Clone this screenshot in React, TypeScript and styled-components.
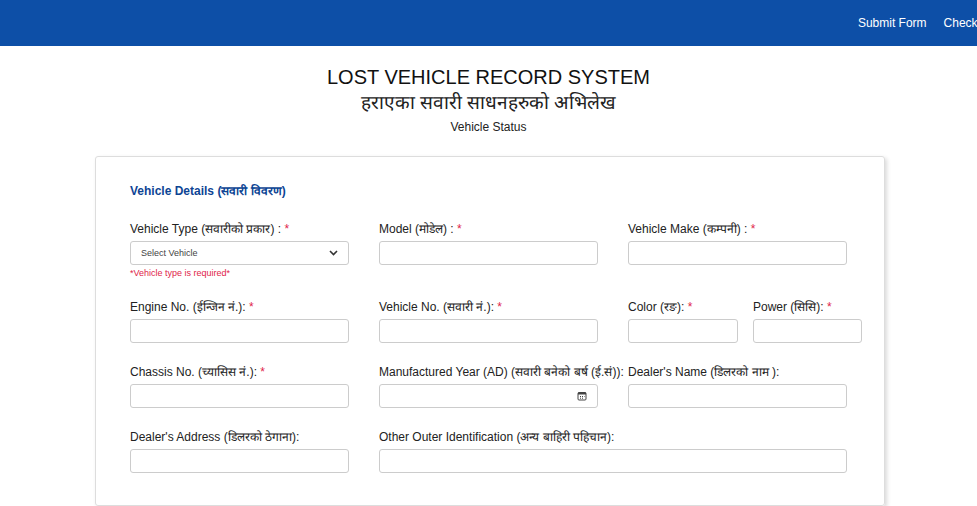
import React from "react";
import styled, { createGlobalStyle } from "styled-components";

const G = createGlobalStyle`
  html,body{margin:0;padding:0;overflow:hidden;background:#fff;font-family:"Liberation Sans",Arial,sans-serif;color:#212529;}
  *{box-sizing:border-box;}
`;
const Nav = styled.nav`
  height:46px;background:#0d4fa7;display:flex;justify-content:flex-end;align-items:center;overflow:hidden;
`;
const Links = styled.div`display:flex;gap:17px;margin-right:-62px;white-space:nowrap;`;
const NavLink = styled.a`color:#fff;font-size:12px;text-decoration:none;`;
const Head = styled.header`text-align:center;padding-top:19px;`;
const H1 = styled.div`font-size:20px;line-height:24px;color:#111;`;
const H2 = styled.div`font-size:19px;line-height:24px;color:#222;margin-top:2px;`;
const Sub = styled.div`font-size:12px;line-height:16px;margin-top:4px;color:#222;`;
const Card = styled.section`
  margin:21px 0 0 95px;width:790px;border:1px solid #ddd;border-radius:3px;
  box-shadow:2px 2px 4px rgba(0,0,0,.15);padding:25px 34px 32px;
`;
const Sec = styled.div`color:#0d4494;font-weight:bold;font-size:12px;margin-bottom:23px;`;
const Grid = styled.div`display:grid;grid-template-columns:219px 219px 219px;column-gap:30px;row-gap:22px;`;
const Field = styled.div<{ span?: number }>`grid-column:span ${p => p.span || 1};display:flex;flex-direction:column;`;
const Split = styled.div`display:grid;grid-template-columns:110px 109px;column-gap:15px;width:234px;`;
const Label = styled.label`font-size:12px;line-height:14px;margin-bottom:5px;color:#222;white-space:nowrap;`;
const Star = styled.span`color:#e0244a;`;
const Input = styled.div`
  height:24px;border:1px solid #ccc;border-radius:3px;background:#fff;display:flex;align-items:center;
  justify-content:space-between;padding:0 10px;font-size:9px;color:#444;
`;
const Err = styled.div`color:#e0244a;font-size:9px;margin-top:3px;`;

const L = ({ t, req }: { t: string; req?: boolean }) => (
  <Label>{t}{req && <Star> *</Star>}</Label>
);

export default function App() {
  return (
    <>
      <G />
      <Nav>
        <Links><NavLink>Submit Form</NavLink><NavLink>Check Application</NavLink></Links>
      </Nav>
      <Head>
        <H1>LOST VEHICLE RECORD SYSTEM</H1>
        <H2>हराएका सवारी साधनहरुको अभिलेख</H2>
        <Sub>Vehicle Status</Sub>
      </Head>
      <Card>
        <Sec>Vehicle Details (सवारी विवरण)</Sec>
        <Grid>
          <Field>
            <L t="Vehicle Type (सवारीको प्रकार) :" req />
            <Input>
              <span>Select Vehicle</span>
              <svg width="9" height="6" viewBox="0 0 9 6"><path d="M1 1l3.5 3.5L8 1" stroke="#333" strokeWidth="1.6" fill="none" /></svg>
            </Input>
            <Err>*Vehicle type is required*</Err>
          </Field>
          <Field><L t="Model (मोडेल) :" req /><Input /></Field>
          <Field><L t="Vehicle Make (कम्पनी) :" req /><Input /></Field>
          <Field><L t="Engine No. (ईन्जिन नं.):" req /><Input /></Field>
          <Field><L t="Vehicle No. (सवारी नं.):" req /><Input /></Field>
          <Split>
            <Field><L t="Color (रङ):" req /><Input /></Field>
            <Field><L t="Power (सिसि):" req /><Input /></Field>
          </Split>
          <Field><L t="Chassis No. (च्यासिस नं.):" req /><Input /></Field>
          <Field>
            <L t="Manufactured Year (AD) (सवारी बनेको बर्ष (ई.सं)):" />
            <Input>
              <span />
              <svg width="10" height="10" viewBox="0 0 10 10"><rect x="1" y="1.5" width="8" height="7.5" rx="1" fill="none" stroke="#444" /><rect x="1" y="1.5" width="8" height="2" fill="#444" /><path d="M3 5.5h1M5 5.5h1M7 5.5h0.5M3 7.2h1M5 7.2h1" stroke="#444" /></svg>
            </Input>
          </Field>
          <Field><L t="Dealer's Name (डिलरको नाम ):" /><Input /></Field>
          <Field><L t="Dealer's Address (डिलरको ठेगाना):" /><Input /></Field>
          <Field span={2}><L t="Other Outer Identification (अन्य बाहिरी पहिचान):" /><Input /></Field>
        </Grid>
      </Card>
    </>
  );
}
